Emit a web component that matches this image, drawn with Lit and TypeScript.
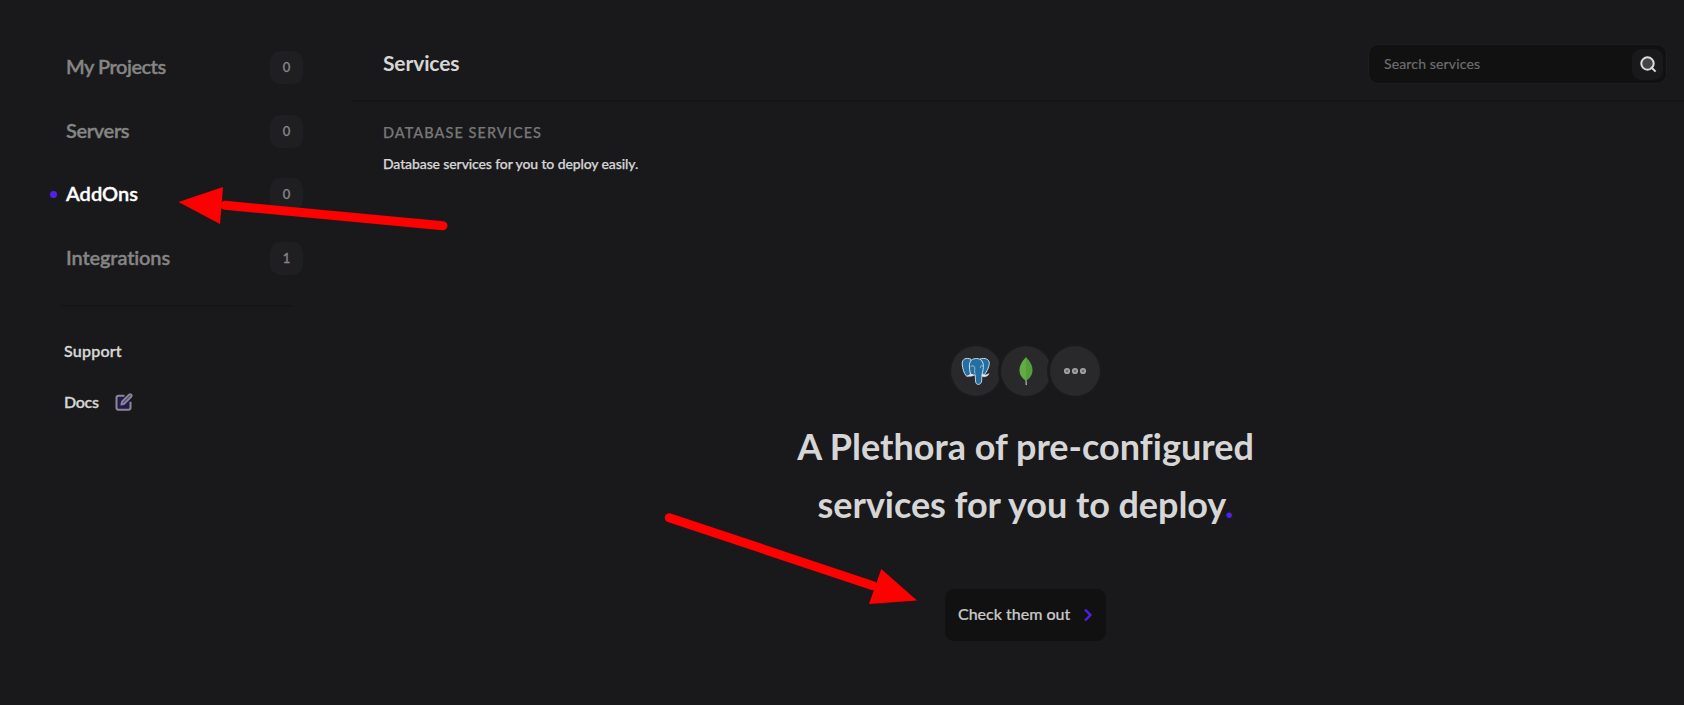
import { html, css, svg, LitElement } from "lit";
import { customElement, property, state } from "lit/decorators.js";
import { classMap } from "lit/directives/class-map.js";

interface NavEntry {
  name: string;
  label: string;
  count: number;
}

const NAV: NavEntry[] = [
  { name: "projects", label: "My Projects", count: 0 },
  { name: "servers", label: "Servers", count: 0 },
  { name: "addons", label: "AddOns", count: 0 },
  { name: "integrations", label: "Integrations", count: 1 },
];

const postgresIcon = svg`
  <g fill="#236fa3" stroke="#dfe8ee" stroke-width=".9" stroke-linejoin="round">
    <path d="M10 2.200C5 .3 1 1.800 1.200 7c.2 4.500 2 9.500 4 11.800 1.400 1.500 3 .2 5-2.800Z" />
    <path d="M19 2c5-1.500 9.500 0 9.300 4.500-.2 3.500-2.300 8-4.800 11L20 17Z" />
    <path d="M10.500 3C13 1 18.500.8 20.800 3.800c2 2.700 1.700 6 1.300 8.700-.4 2.300-.8 3.500-1.100 5-.4 2.500 0 6-.8 8-.9 2.300-4.400 2.600-5.300.3-.7-2-.4-5-.7-8-1.700.8-4.700.4-5-2C8.800 13.500 8.500 12 8.400 10 8.300 7 8.800 4.500 10.500 3Z" />
  </g>
  <path d="M9.500 9.500c2-1.200 4-.8 4.200 1.200.2 2-.6 3.800.4 6M21.800 9c-1.600-.8-2.600 0-2.500 1.800"
    fill="none" stroke="#dfe8ee" stroke-width=".6" />
  <path d="M13 18c-2 1.500-5.500 1.600-6.500.6 1.700 0 2.700-.8 3.300-1.800M21 17.500c2.300.8 4.500.4 7-.8-1 2.500-4.300 3.600-7 2.600"
    fill="#dfe8ee" stroke="#dfe8ee" stroke-width=".6" />
`;

@customElement("nav-item")
export class NavItem extends LitElement {
  @property() label = "";
  @property() name = "";
  @property({ type: Number }) count = 0;
  @property({ type: Boolean }) active = false;

  static styles = css`
    :host {
      display: block;
    }
    .item {
      display: flex;
      align-items: center;
      height: 33px;
      cursor: pointer;
    }
    .dot {
      width: 7px;
      height: 7px;
      margin-right: 9px;
      border-radius: 50%;
    }
    .active .dot {
      background: #5120f0;
    }
    .label {
      flex: 1;
      padding-bottom: 3px;
      font-size: 20px;
      font-weight: 600;
      color: #858585;
      -webkit-text-stroke: 0.35px;
    }
    .projects {
      letter-spacing: -0.5px;
    }
    .servers {
      letter-spacing: -0.35px;
    }
    .addons {
      letter-spacing: 0.05px;
    }
    .integrations {
      letter-spacing: -0.15px;
    }
    .active .label {
      color: #fff;
    }
    .count {
      width: 33px;
      height: 33px;
      border-radius: 10px;
      background: #1f1f21;
      color: #858585;
      font-size: 13px;
      font-weight: 500;
      line-height: 33px;
      text-align: center;
      -webkit-text-stroke: 0.3px;
    }
  `;

  render() {
    return html`
      <div class=${classMap({ item: true, active: this.active })}>
        <span class="dot"></span>
        <span class="label ${this.name}">${this.label}</span>
        <span class="count">${this.count}</span>
      </div>
    `;
  }
}

@customElement("red-arrows")
export class RedArrows extends LitElement {
  static styles = css`
    :host {
      position: absolute;
      inset: 0;
      pointer-events: none;
    }
    .layer {
      display: block;
      width: 1684px;
      height: 705px;
    }
    .shaft {
      stroke: #f00;
      stroke-width: 9;
      stroke-linecap: round;
    }
    .head {
      fill: #f00;
    }
  `;

  render() {
    return html`
      <svg class="layer" viewBox="0 0 1684 705">
        <line class="shaft" x1="443" y1="225.700" x2="225" y2="205.300" />
        <polygon class="head" points="178.500,202 223,187 220,224" />
        <line class="shaft" x1="669.300" y1="517.700" x2="873" y2="585.800" />
        <polygon class="head" points="917,600.500 881.300,569 869,604" />
      </svg>
    `;
  }
}

@customElement("app-root")
export class AppRoot extends LitElement {
  @state() private current = "addons";

  static styles = css`
    :host {
      display: grid;
      grid-template-columns: 351px minmax(0, 1fr);
      position: relative;
      width: 1684px;
      height: 705px;
      overflow: hidden;
      background: #19191b;
      color: #d6d6d6;
      font-family: Lato, "Open Sans", sans-serif;
    }
    .sidebar {
      padding: 51px 48px 0 50px;
    }
    .nav {
      display: grid;
      row-gap: 30.5px;
    }
    .rule {
      width: 229px;
      height: 2px;
      margin: 30px 0 0 12px;
      background: #151517;
    }
    .links {
      display: grid;
      row-gap: 27px;
      margin: 32px 0 0 14px;
      font-size: 16px;
      font-weight: 600;
      line-height: 24px;
      -webkit-text-stroke: 0.3px;
    }
    .link {
      display: flex;
      align-items: center;
    }
    .support {
      letter-spacing: 0.2px;
    }
    .docs {
      letter-spacing: -0.3px;
    }
    .docs svg {
      width: 18px;
      height: 18px;
      margin: 0 0 0 16px;
    }
    .main {
      display: flex;
      flex-direction: column;
    }
    .header {
      display: flex;
      justify-content: space-between;
      height: 100px;
      padding: 44px 17px 0 32px;
      box-sizing: border-box;
    }
    .title {
      margin: 7px 0 0;
      font-size: 21px;
      font-weight: 700;
      line-height: 24px;
      letter-spacing: -0.12px;
    }
    .line {
      height: 2px;
      background: #151517;
    }
    .search {
      display: flex;
      align-items: center;
      justify-content: space-between;
      width: 299px;
      height: 40px;
      padding: 0 3px 0 15px;
      box-sizing: border-box;
      border: 1px solid #1e1e20;
      border-radius: 10px;
      background: #111;
      color: #6e6e6e;
      font-size: 14px;
    }
    .hint {
      padding-bottom: 2px;
      letter-spacing: 0.15px;
      -webkit-text-stroke: 0.2px;
    }
    .search-button {
      display: grid;
      place-items: center;
      width: 31px;
      height: 31px;
      border-radius: 9px;
      background: #19191b;
    }
    .search-button svg {
      width: 18px;
      height: 18px;
    }
    .intro {
      padding: 21px 32px 0;
    }
    .kicker {
      margin: 0;
      color: #777;
      font-size: 14.5px;
      font-weight: 500;
      line-height: 20px;
      letter-spacing: 1.05px;
      -webkit-text-stroke: 0.25px;
    }
    .text {
      margin: 11px 0 0;
      font-size: 14px;
      font-weight: 500;
      line-height: 20px;
      letter-spacing: -0.11px;
      -webkit-text-stroke: 0.25px;
    }
    .empty {
      display: flex;
      flex-direction: column;
      align-items: center;
      margin-top: 172px;
      padding-left: 16px;
    }
    .bubbles {
      display: flex;
    }
    .bubble {
      display: grid;
      place-items: center;
      width: 50px;
      height: 50px;
      border-radius: 50%;
      background: #29292b;
      box-shadow: 0 0 0 3px #1a1a1c;
    }
    .bubble + .bubble {
      margin-left: -0.5px;
    }
    .headline {
      margin: 21px 0 0;
      font-size: 36px;
      font-weight: 700;
      line-height: 58px;
      text-align: center;
    }
    .first {
      display: block;
      letter-spacing: 0.02px;
    }
    .second {
      display: block;
      letter-spacing: -0.05px;
    }
    .stop {
      color: #5120f0;
    }
    .cta {
      display: flex;
      align-items: center;
      width: 161px;
      height: 52px;
      margin-top: 56px;
      padding: 0 13px 3px;
      box-sizing: border-box;
      border: 0;
      border-radius: 9px;
      background: #111;
      color: #c8c8c8;
      font-family: inherit;
      font-size: 16px;
      font-weight: 500;
      -webkit-text-stroke: 0.2px;
      cursor: pointer;
    }
    .cta svg {
      width: 10px;
      height: 14px;
      margin: 3px 0 0 auto;
    }
  `;

  render() {
    return html`
      <aside class="sidebar">
        <nav class="nav">
          ${NAV.map(
            (item) => html`
              <nav-item
                name=${item.name}
                label=${item.label}
                .count=${item.count}
                ?active=${item.name === this.current}
                @click=${() => (this.current = item.name)}
              ></nav-item>
            `
          )}
        </nav>
        <div class="rule"></div>
        <div class="links">
          <div class="link support">Support</div>
          <div class="link docs">
            Docs
            <svg viewBox="0 0 18 18" fill="none">
              <rect x="2" y="3.500" width="13" height="12.500" fill="#241a4c" />
              <path d="M9.500 2.800H3.500a2 2 0 0 0-2 2v10a2 2 0 0 0 2 2h10a2 2 0 0 0 2-2V8.800"
                stroke="#8b8795" stroke-width="2" />
              <path d="M6.300 11.700l.7-3 7-7a1.300 1.300 0 0 1 2.200 2.200l-7 7-2.900.8Z"
                fill="#5a5278" stroke="#8b8795" stroke-width="1.700" stroke-linejoin="round" />
            </svg>
          </div>
        </div>
      </aside>
      <main class="main">
        <header class="header">
          <h1 class="title">Services</h1>
          <div class="search">
            <span class="hint">Search services</span>
            <span class="search-button">
              <svg viewBox="0 0 18 18" fill="none">
                <circle cx="8.500" cy="8.500" r="6.200" fill="#444446" stroke="#dcdcdc" stroke-width="2" />
                <path d="M12 12l4.600 4.600" stroke="#dcdcdc" stroke-width="2" />
              </svg>
            </span>
          </div>
        </header>
        <div class="line"></div>
        <section class="intro">
          <h2 class="kicker">DATABASE SERVICES</h2>
          <p class="text">Database services for you to deploy easily.</p>
        </section>
        <section class="empty">
          <div class="bubbles">
            <span class="bubble">
              <svg width="30" height="29" viewBox="0 0 30 29">${postgresIcon}</svg>
            </span>
            <span class="bubble">
              <svg width="16" height="30" viewBox="0 0 16 30">
                <path d="M7.500 23h1l.4 6H7.600Z" fill="#b8b8b8" />
                <path d="M8 1C4 5.500 1.500 9 1.500 14.500 1.500 19 4 22 8 25Z" fill="#62ad43" />
                <path d="M8 1c4 4.500 6.500 8 6.500 13.500C14.500 19 12 22 8 25Z" fill="#559e3c" />
              </svg>
            </span>
            <span class="bubble">
              <svg width="24" height="8" viewBox="0 0 24 8" fill="#6c6c6e" stroke="#a0a0a2" stroke-width="1.800">
                <circle cx="4" cy="4" r="2.200" />
                <circle cx="12" cy="4" r="2.200" />
                <circle cx="20" cy="4" r="2.200" />
              </svg>
            </span>
          </div>
          <h2 class="headline">
            <span class="first">A Plethora of pre-configured</span>
            <span class="second">services for you to deploy<span class="stop">.</span></span>
          </h2>
          <button class="cta">
            Check them out
            <svg viewBox="0 0 10 14" fill="none" stroke="#5120f0" stroke-width="2.200">
              <path d="M2 1.500L7.500 7 2 12.500" />
            </svg>
          </button>
        </section>
      </main>
      <red-arrows></red-arrows>
    `;
  }
}
